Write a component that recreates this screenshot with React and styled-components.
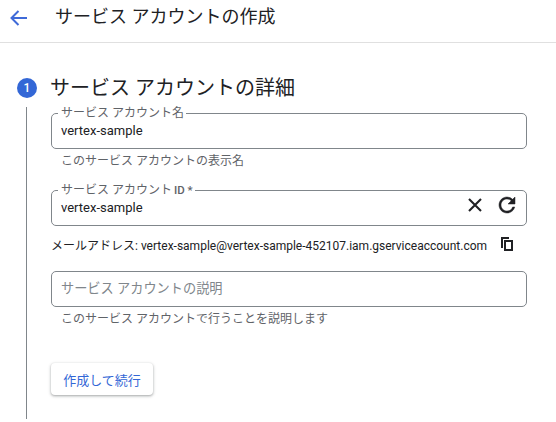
import React from "react";
import styled, { createGlobalStyle } from "styled-components";

const Global = createGlobalStyle`
  html, body { margin: 0; padding: 0; background: #fff; }
  body { font-family: Roboto, "Noto Sans CJK JP", sans-serif; color: #202124; overflow: hidden; }
`;
const Page = styled.div`width: 556px; height: 422px; display: flex; flex-direction: column; overflow: hidden;`;
const Header = styled.header`
  flex: none; display: flex; align-items: flex-start; padding: 5px 0 0 9px; box-sizing: content-box;
  height: 37px; border-bottom: 1px solid #e0e0e0;
`;
const BackButton = styled.span`width: 20px; height: 20px; display: flex; margin-right: 26px; margin-top: 3px;`;
const PageTitle = styled.h1`margin: 0; font-size: 18px; font-weight: 400; line-height: 24px; color: #202124;`;
const Step = styled.section`display: flex; flex-direction: column; padding: 30px 0 0 17px;`;
const StepHead = styled.div`display: flex; align-items: center; gap: 13px; height: 30px;`;
const Badge = styled.span`
  width: 20px; height: 20px; border-radius: 50%; background: #3367d6; color: #fff; font-size: 12px; font-weight: 500;
  display: flex; align-items: center; justify-content: center; flex: none;
`;
const StepTitle = styled.h2`margin: 0; font-size: 20px; font-weight: 400; line-height: 30px; color: #202124;`;
const StepBody = styled.div`
  margin: 4px 0 0 9px; padding: 0 0 0 24px; border-left: 1px solid #80868b; width: 476px; height: 312px;
  display: flex; flex-direction: column;
`;
const Field = styled.fieldset`
  margin: ${p => p.$top || 0}px 0 0; padding: 0 8px 0 6px; width: 476px; height: ${p => p.$legend ? 42 : 36}px; box-sizing: border-box;
  border: 1px solid #80868b; border-radius: 5px; display: flex; align-items: flex-start; min-inline-size: 0;
`;
const Legend = styled.legend`
  padding: 0 2px 0 3px; margin: 0; font-size: 12px; line-height: 12px; height: 12px; color: #5f6368; white-space: nowrap;
`;
const LegendStrong = styled.span`font-size: 11.5px; font-weight: 500; margin-left: 2px; color: #5f6368;`;
const Value = styled.div`flex: 1; padding-left: 3px; font-size: 13px; line-height: 16px; color: #202124; margin-top: 4px;`;
const Placeholder = styled.div`padding-left: 3px; margin-top: 7px; font-size: 13.2px; line-height: 20px; color: #80868b;`;
const Hint = styled.div`margin: 4px 0 0 10px; font-size: 12px; line-height: 17px; color: #5f6368;`;
const EmailRow = styled.div`display: flex; align-items: center; height: 20px; margin-top: 8px; font-size: 12px; color: #202124; white-space: nowrap;`;
const EmailText = styled.span`width: 450px;`;
const IconSlot = styled.span`display: flex; width: 24px; height: 24px; align-items: center; justify-content: center;`;
const Icons = styled.div`display: flex; gap: 8px; margin: -3px -1px 0 0;`;
const CreateButton = styled.button`
  margin-top: 35px; width: 102px; height: 32px; align-self: flex-start; border: 0; border-radius: 4px; background: #fff;
  color: #3367d6; font: 400 13px Roboto, "Noto Sans CJK JP", sans-serif;
  box-shadow: 0 1px 2px rgba(60,64,67,.3), 0 1px 3px 1px rgba(60,64,67,.15);
`;

const Arrow = () => (
  <svg width="20" height="20" viewBox="0 0 20 20" fill="none" stroke="#3f6ad8" strokeWidth="2">
    <path d="M18 10H3M9.500 3 2.500 10l7 7" />
  </svg>
);
const CloseIcon = () => (
  <svg width="16" height="16" viewBox="0 0 16 16" fill="none" stroke="#202124" strokeWidth="2.1"><path d="M2 2l12 12M14 2 2 14" /></svg>
);
const Refresh = () => (
  <svg width="24" height="24" viewBox="0 0 24 24" fill="#202124" stroke="#202124" strokeWidth=".5"><path d="M17.65 6.35A7.958 7.958 0 0 0 12 4c-4.420 0-7.990 3.580-7.990 8s3.570 8 7.990 8c3.730 0 6.840-2.550 7.730-6h-2.080A5.990 5.990 0 0 1 12 18c-3.310 0-6-2.690-6-6s2.690-6 6-6c1.660 0 3.140.690 4.220 1.780L13 11h7V4l-2.350 2.350z" /></svg>
);
const Copy = () => (
  <svg width="12" height="14" viewBox="0 0 12 14" fill="#202124"><path d="M0 0h8v2H2v9H0V0zm3 3h9v11H3V3zm2 2v7h5V5H5z" fillRule="evenodd" /></svg>
);

export default function App() {
  return (
    <Page>
      <Global />
      <Header>
        <BackButton><Arrow /></BackButton>
        <PageTitle>サービス アカウントの作成</PageTitle>
      </Header>
      <Step>
        <StepHead>
          <Badge>1</Badge>
          <StepTitle>サービス アカウントの詳細</StepTitle>
        </StepHead>
        <StepBody>
          <Field $legend>
            <Legend>サービス アカウント名</Legend>
            <Value>vertex-sample</Value>
          </Field>
          <Hint>このサービス アカウントの表示名</Hint>
          <Field $legend $top={14}>
            <Legend>サービス アカウント<LegendStrong>ID *</LegendStrong></Legend>
            <Value>vertex-sample</Value>
            <Icons>
              <IconSlot><CloseIcon /></IconSlot>
              <IconSlot><Refresh /></IconSlot>
            </Icons>
          </Field>
          <EmailRow>
            <EmailText>メールアドレス: vertex-sample@vertex-sample-452107.iam.gserviceaccount.com</EmailText>
            <Copy />
          </EmailRow>
          <Field $top={17}>
            <Placeholder>サービス アカウントの説明</Placeholder>
          </Field>
          <Hint>このサービス アカウントで行うことを説明します</Hint>
          <CreateButton>作成して続行</CreateButton>
        </StepBody>
      </Step>
    </Page>
  );
}
